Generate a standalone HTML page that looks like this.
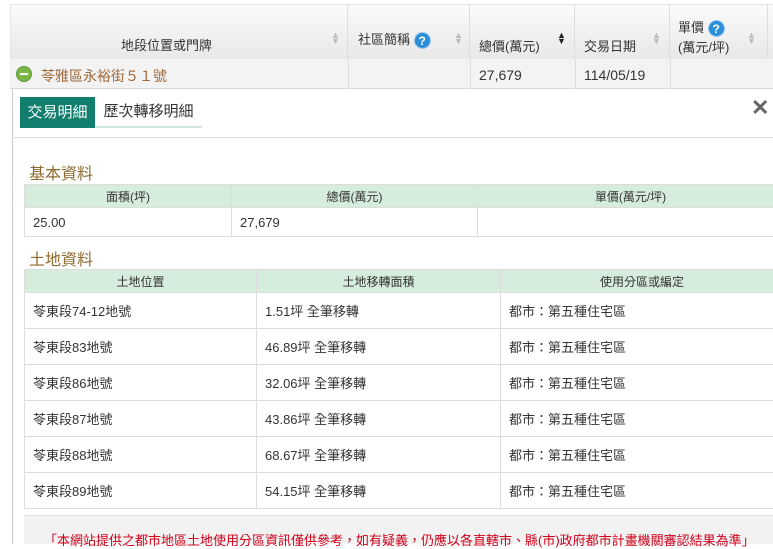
<!DOCTYPE html>
<html><head><meta charset="utf-8"><style>
*{margin:0;padding:0;box-sizing:border-box}
body{width:773px;height:544px;overflow:hidden;background:#fff;font-family:"Liberation Sans","Noto Sans CJK TC",sans-serif;position:relative;color:#333}
.a{position:absolute}
.hd{top:5px;height:54px;background:linear-gradient(#fbfbfb,#e8e8e8);border-right:1px solid #ddd;font-size:13px;color:#333}
.sort{position:absolute;color:#bbb;font-size:9px;line-height:6px}
.q{display:inline-block;width:17px;height:17px;border-radius:50%;background:#2a8fd8;color:#fff;font-size:12px;font-weight:bold;text-align:center;line-height:17px;border:1px solid #9cc9ee;vertical-align:middle}
table{border-collapse:collapse;position:absolute}
td,th{border:1px solid #ddd;font-size:13px;color:#333;font-weight:normal}
th{background:#d6ecdc;height:23px;font-size:12px}
td{padding-left:8px}
.sec{font-size:16px;color:#8f6a2f}
</style></head><body>
<div class="a" style="left:0;top:0;width:773px;height:5px;background:#fff"></div>
<div class="a" style="left:10px;top:4px;width:763px;height:1px;background:#e5e5e5"></div>
<div class="a hd" style="left:10px;width:338px;border-left:1px solid #e5e5e5"><span class="a" style="left:110px;top:30px">地段位置或門牌</span><span class="sort" style="left:320px;top:27px">▲<br>▼</span></div>
<div class="a hd" style="left:348px;width:122px"><span class="a" style="left:10px;top:24px">社區簡稱 <span class="q">?</span></span><span class="sort" style="left:106px;top:27px">▲<br>▼</span></div>
<div class="a hd" style="left:470px;width:105px"><span class="a" style="left:9px;top:31px">總價(萬元)</span><span class="sort" style="left:87px;top:27px;color:#222">▲<br>▼</span></div>
<div class="a hd" style="left:575px;width:95px"><span class="a" style="left:9px;top:31px">交易日期</span><span class="sort" style="left:77px;top:27px">▲<br>▼</span></div>
<div class="a hd" style="left:670px;width:98px"><span class="a" style="left:8px;top:13px;line-height:20px">單價 <span class="q">?</span><br>(萬元/坪)</span><span class="sort" style="left:77px;top:27px">▲<br>▼</span></div>
<div class="a hd" style="left:768px;width:10px"></div>
<div class="a" style="left:10px;top:59px;width:763px;height:30px;background:#f3f3f3;border-bottom:1px solid #d8d8d8"></div>
<div class="a" style="left:348px;top:59px;width:1px;height:30px;background:#ddd"></div>
<div class="a" style="left:470px;top:59px;width:1px;height:30px;background:#ddd"></div>
<div class="a" style="left:575px;top:59px;width:1px;height:30px;background:#ddd"></div>
<div class="a" style="left:670px;top:59px;width:1px;height:30px;background:#ddd"></div>
<div class="a" style="left:16px;top:66px;width:16px;height:16px;border-radius:50%;background:#7ab648;border:1px solid #5a9a32"><div class="a" style="left:3px;top:6px;width:8px;height:2px;background:#fff"></div></div>
<span class="a" style="left:41px;top:66px;font-size:14px;color:#a0693a">苓雅區永裕街５１號</span>
<span class="a" style="left:479px;top:67px;font-size:14px">27,679</span>
<span class="a" style="left:584px;top:67px;font-size:14px">114/05/19</span>
<div class="a" style="left:12px;top:89px;width:761px;height:455px;background:#fff;border-left:1px solid #ccc"></div>
<div class="a" style="left:20px;top:97px;width:75px;height:31px;background:#117e6e;color:#fff;font-size:15px;line-height:31px;text-align:center">交易明細</div>
<div class="a" style="left:95px;top:97px;width:107px;height:31px;background:#fff;color:#333;font-size:15px;line-height:30px;text-align:center;border-bottom:2px solid #cfe5df">歷次轉移明細</div>
<div class="a" style="left:751px;top:95px;font-size:22px;color:#666;font-weight:bold">✕</div>
<div class="a" style="left:12px;top:137px;width:761px;height:1px;background:#ddd"></div>
<div class="a sec" style="left:29px;top:160px">基本資料</div>
<table style="left:24px;top:184px;width:760px">
<tr><th style="width:207px">面積(坪)</th><th style="width:246px">總價(萬元)</th><th>單價(萬元/坪)</th></tr>
<tr style="height:29px"><td>25.00</td><td>27,679</td><td></td></tr></table>
<div class="a sec" style="left:29px;top:246px">土地資料</div>
<table style="left:24px;top:269px;width:760px">
<tr><th style="width:232px">土地位置</th><th style="width:244px">土地移轉面積</th><th>使用分區或編定</th></tr>
<tr style="height:36px"><td>苓東段74-12地號</td><td>1.51坪 全筆移轉</td><td>都市：第五種住宅區</td></tr>
<tr style="height:36px"><td>苓東段83地號</td><td>46.89坪 全筆移轉</td><td>都市：第五種住宅區</td></tr>
<tr style="height:36px"><td>苓東段86地號</td><td>32.06坪 全筆移轉</td><td>都市：第五種住宅區</td></tr>
<tr style="height:36px"><td>苓東段87地號</td><td>43.86坪 全筆移轉</td><td>都市：第五種住宅區</td></tr>
<tr style="height:36px"><td>苓東段88地號</td><td>68.67坪 全筆移轉</td><td>都市：第五種住宅區</td></tr>
<tr style="height:36px"><td>苓東段89地號</td><td>54.15坪 全筆移轉</td><td>都市：第五種住宅區</td></tr></table>
<div class="a" style="left:24px;top:515px;width:749px;height:29px;background:#f2f2f2;border-top:1px solid #e2e2e2"></div>
<div class="a" style="left:44px;top:530px;font-size:13px;color:#d0001a;white-space:nowrap">「本網站提供之都市地區土地使用分區資訊僅供參考，如有疑義，仍應以各直轄市、縣(市)政府都市計畫機關審認結果為準」</div>
</body></html>
